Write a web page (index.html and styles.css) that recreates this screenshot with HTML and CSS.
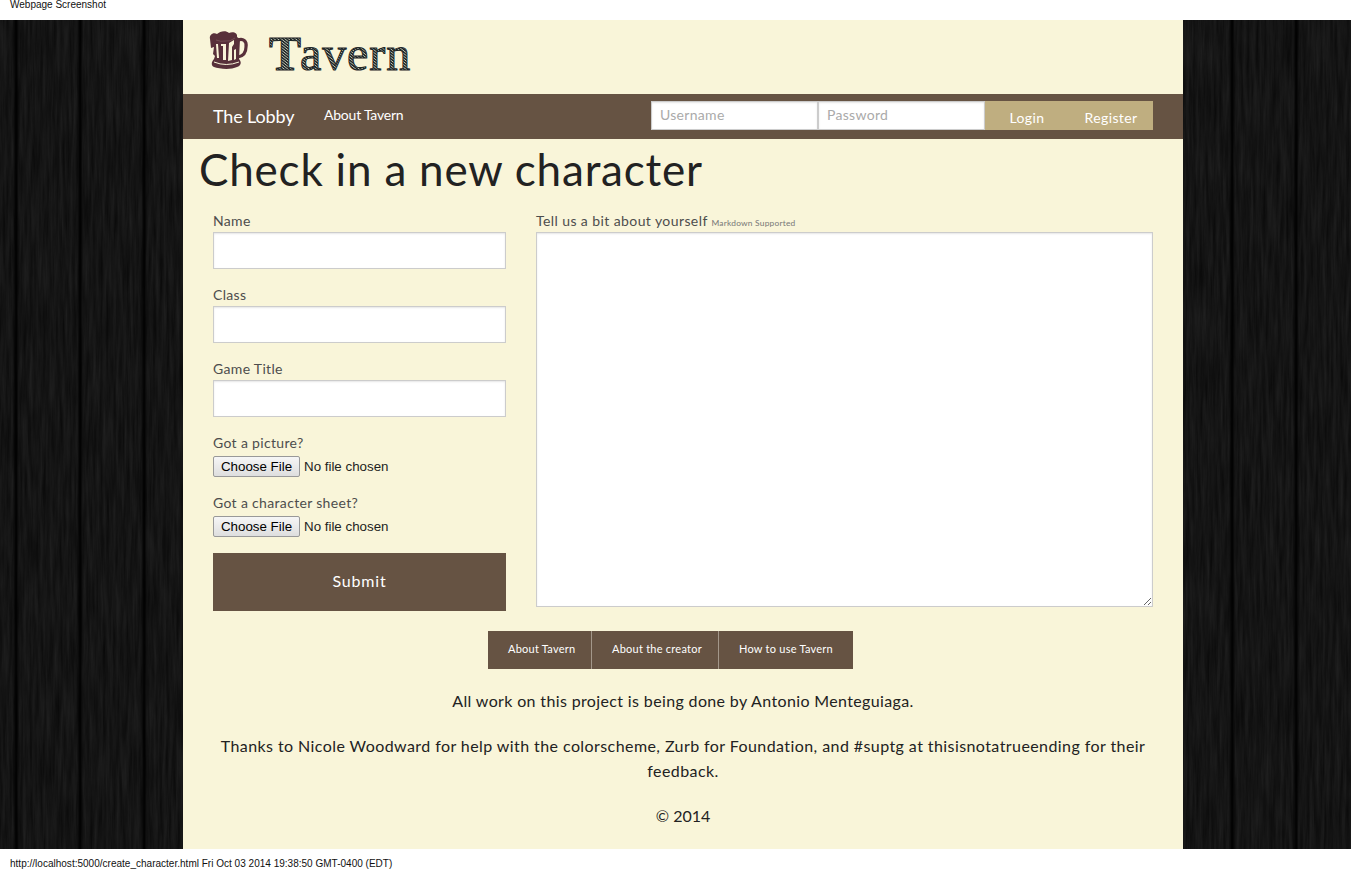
FILE: index.html
```
<!DOCTYPE html>
<html lang="en">
<head>
<meta charset="utf-8">
<title>Tavern</title>
<link rel="stylesheet" href="styles.css">
</head>
<body>
<div class="caption caption-top">Webpage Screenshot</div>
<div class="stage">
  <svg class="wood" viewBox="0 0 1351 829" width="1351" height="829" aria-hidden="true">
    <defs>
      <filter id="grain" x="0" y="0" width="100%" height="100%" color-interpolation-filters="sRGB">
        <feTurbulence type="fractalNoise" baseFrequency="0.3 0.018" numOctaves="4" seed="8"/>
        <feColorMatrix values="0.1 0 0 0 0.03  0.1 0 0 0 0.03  0.1 0 0 0 0.03  0 0 0 0 1"/>
      </filter>
      <linearGradient id="seam">
        <stop offset="0" stop-color="#000" stop-opacity="0"/>
        <stop offset="0.45" stop-color="#000" stop-opacity="0.85"/>
        <stop offset="0.6" stop-color="#000" stop-opacity="0.85"/>
        <stop offset="1" stop-color="#000" stop-opacity="0"/>
      </linearGradient>
      <pattern id="planks" width="64" height="829" patternUnits="userSpaceOnUse">
        <rect x="13" width="6" height="829" fill="url(#seam)"/>
      </pattern>
    </defs>
    <rect width="1351" height="829" filter="url(#grain)"/>
    <rect width="1351" height="829" fill="url(#planks)"/>
  </svg>
  <div class="page">
    <header class="brand">
      <svg class="mug" viewBox="0 0 40 40" width="40" height="40" aria-hidden="true">
        <path fill="#58303a" d="M1 9C0 5 4 2 8 4C11 1 17 0 20 3C24 1 29 3 28 7L31 9L30 29C33 32 32 36 28 37C22 40 10 39 5 37C2 36 2 32 5 29L6 26L4 24L5 17L2 18Z"/>
        <path fill="none" stroke="#58303a" stroke-width="3.2" d="M29 10C34 8 38 11 37 17C37 23 34 26 29 27"/>
        <path fill="#f9f4d8" d="M7 14L9 14L10 28L8 28ZM12 14L17 14L17 30L14 30L14 16L12 16ZM20 13L25 10L25 14L23 17L23 30L19 31ZM25 20L27 19L27 29L25 30Z"/>
        <path fill="none" stroke="#f9f4d8" stroke-width="1" d="M5 32Q17 37 30 32"/>
        <path fill="none" stroke="#8d6d6b" stroke-width=".5" d="M7 10Q12 12 16 11Q21 12 26 8"/>
      </svg>
      <svg class="wordmark" viewBox="0 0 200 64" width="200" height="64" role="img" aria-label="Tavern">
        <defs>
          <pattern id="hatch" width="2.2" height="2.2" patternUnits="userSpaceOnUse" patternTransform="rotate(38)">
            <rect width="2.2" height="2.2" fill="#1a2224"/>
            <rect width="2.2" height="0.8" fill="#c4c6b4"/>
          </pattern>
        </defs>
        <text class="logo-text" x="2" y="39.5"><tspan class="logo-cap">T</tspan>avern</text>
      </svg>
    </header>
    <nav class="topbar">
      <a class="lobby">The Lobby</a>
      <a class="about">About Tavern</a>
      <form class="login">
        <input type="text" placeholder="Username">
        <input type="text" placeholder="Password">
        <a class="login-btn"><span>Login</span></a>
        <a class="register-btn"><span>Register</span></a>
      </form>
    </nav>
    <h1>Check in a new character</h1>
    <div class="form">
      <div class="left">
        <label>Name</label>
        <input class="field" type="text">
        <label>Class</label>
        <input class="field" type="text">
        <label>Game Title</label>
        <input class="field" type="text">
        <label>Got a picture?</label>
        <div class="file"><button type="button">Choose File</button><span>No file chosen</span></div>
        <label>Got a character sheet?</label>
        <div class="file"><button type="button">Choose File</button><span>No file chosen</span></div>
        <a class="submit">Submit</a>
      </div>
      <div class="right">
        <label class="about-you">Tell us a bit about yourself <small>Markdown Supported</small></label>
        <textarea></textarea>
      </div>
    </div>
    <div class="links">
      <a class="k1">About Tavern</a>
      <a class="k2">About the creator</a>
      <a class="k3">How to use Tavern</a>
    </div>
    <footer>
      <p class="credit">All work on this project is being done by Antonio Menteguiaga.</p>
      <p class="thanks">Thanks to Nicole Woodward for help with the colorscheme, Zurb for Foundation, and #suptg at thisisnotatrueending for their<br>feedback.</p>
      <p>© 2014</p>
    </footer>
  </div>
</div>
<div class="caption caption-bottom">http://localhost:5000/create_character.html Fri Oct 03 2014 19:38:50 GMT-0400 (EDT)</div>
</body>
</html>
```
FILE: styles.css
```
* { box-sizing: border-box; }
body { margin: 0; width: 1351px; height: 869px; overflow: hidden; background: #fff; color: #222; font-family: Lato, "Noto Sans", sans-serif; font-variant-ligatures: none; }
.caption { height: 20px; padding-left: 10px; font: 10px/12px "Liberation Sans", Arial, sans-serif; color: #111; white-space: nowrap; }
.caption-top { line-height: 10px; }
.caption-bottom { padding-top: 9px; letter-spacing: .012px; }
.stage { display: grid; grid-template-columns: 183px 1000px 168px; height: 829px; background: #121212; overflow: hidden; }
.wood { grid-area: 1 / 1 / 2 / 4; display: block; }
.page { grid-area: 1 / 2; z-index: 1; background: #f9f5d9; }
.brand { height: 74px; display: flex; padding: 10px 0 0 26px; }
.mug { margin-right: 18px; }
.wordmark { flex: none; overflow: visible; }
.logo-text { font: 48px "Liberation Serif", serif; letter-spacing: .9px; fill: url(#hatch); stroke: #1f2729; stroke-width: 1px; }
.logo-cap { font-weight: bold; letter-spacing: -1px; }
.topbar { height: 45px; background: #665343; color: #fff; display: flex; padding: 0 30px; line-height: 44px; }
.lobby { font-size: 18px; width: 111px; letter-spacing: -.15px; white-space: nowrap; }
.about { font-size: 14px; line-height: 42px; letter-spacing: -.22px; }
.login { display: flex; margin: 7px 0 9px auto; height: 29px; }
.login input { width: 167px; height: 29px; font-size: 14px; letter-spacing: .3px; padding: 0 8px 2px; }
input, textarea { font-family: inherit; background: #fff; border: 1px solid #ccc; border-radius: 0; box-shadow: inset 0 1px 2px rgba(0,0,0,.1); outline: 0; }
input::placeholder { color: #aaa; opacity: 1; }
.login a { background: #bfae80; font-size: 14px; line-height: 34px; height: 29px; text-align: center; letter-spacing: .4px; }
.login-btn { width: 84px; }
.register-btn { width: 84px; }
h1 { margin: 0; height: 72px; padding-left: 16px; font-size: 44px; line-height: 61px; font-weight: 400; letter-spacing: .8px; white-space: nowrap; }
.form { display: grid; grid-template-columns: 293px 617px; gap: 30px; padding: 0 30px; height: 400px; }
label { display: block; height: 21px; line-height: 19px; font-size: 14px; letter-spacing: .33px; color: #4d4d4d; white-space: nowrap; }
.about-you { letter-spacing: .41px; }
small { font-size: 8.4px; letter-spacing: .22px; color: #777; }
.field { display: block; width: 293px; height: 37px; margin-bottom: 16px; }
.file { display: flex; align-items: center; height: 21px; margin: 2px 0 16px; font: 13.33px "Liberation Sans", Arial, sans-serif; }
.file button { width: 87px; height: 21px; padding: 0; margin-right: 4px; font: inherit; color: #000; border: 1px solid #999; border-radius: 2px; background: linear-gradient(#f6f6f6, #dedede); }
.submit { display: block; height: 58px; line-height: 56px; text-align: center; background: #665343; color: #fff; font-size: 16px; letter-spacing: .8px; }
textarea { display: block; width: 617px; height: 375px; resize: both; }
.links { display: flex; margin: 20px 0 19px 305px; height: 38px; }
.links a { background: #665343; color: #fff; font-size: 11px; line-height: 36px; padding-left: 20px; letter-spacing: .24px; white-space: nowrap; border-right: 1px solid #a3978a; }
.links .k1 { width: 104px; }
.links .k2 { width: 127px; }
.links .k3 { width: 134px; border: 0; }
footer { font-size: 16px; line-height: 25px; text-align: center; }
footer p { margin: 0 0 20px; white-space: nowrap; }
.credit { letter-spacing: .36px; }
.thanks { letter-spacing: .42px; }
```
